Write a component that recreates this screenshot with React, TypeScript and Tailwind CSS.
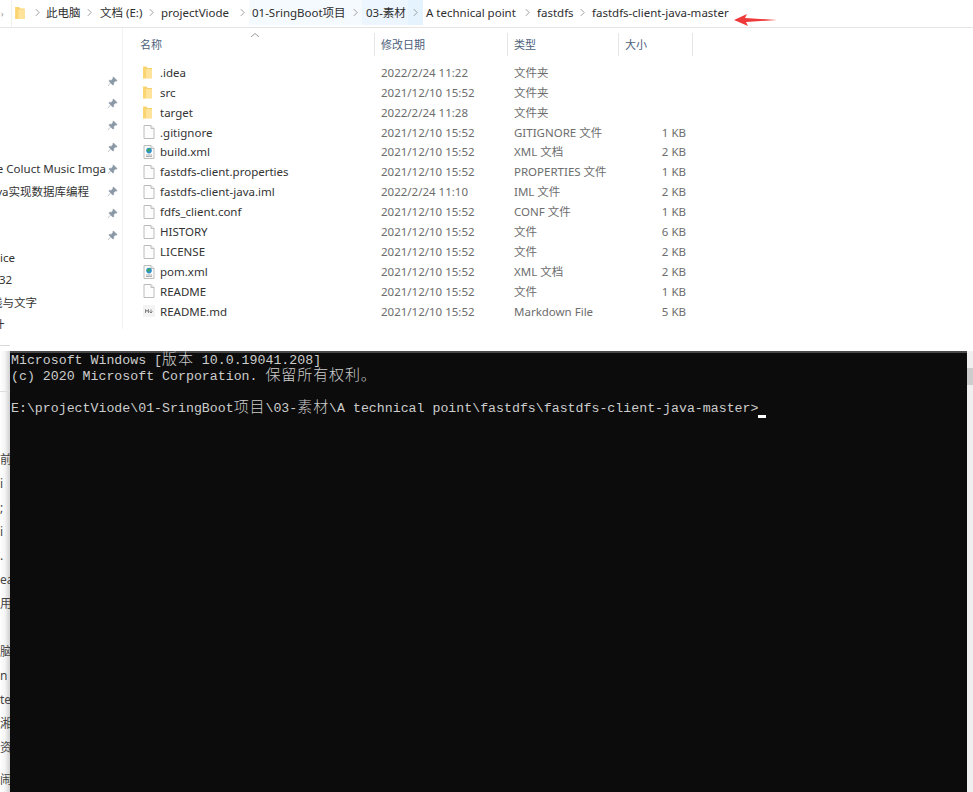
import React from 'react';

const UI_FONT = "font-['Noto_Sans','Noto_Sans_CJK_SC',sans-serif]";

interface FileRow {
  name: string;
  date: string;
  type: string;
  size: string;
  icon: 'folder' | 'file' | 'xml' | 'md';
}

const files: FileRow[] = [
  { name: '.idea', date: '2022/2/24 11:22', type: '文件夹', size: '', icon: 'folder' },
  { name: 'src', date: '2021/12/10 15:52', type: '文件夹', size: '', icon: 'folder' },
  { name: 'target', date: '2022/2/24 11:28', type: '文件夹', size: '', icon: 'folder' },
  { name: '.gitignore', date: '2021/12/10 15:52', type: 'GITIGNORE 文件', size: '1 KB', icon: 'file' },
  { name: 'build.xml', date: '2021/12/10 15:52', type: 'XML 文档', size: '2 KB', icon: 'xml' },
  { name: 'fastdfs-client.properties', date: '2021/12/10 15:52', type: 'PROPERTIES 文件', size: '1 KB', icon: 'file' },
  { name: 'fastdfs-client-java.iml', date: '2022/2/24 11:10', type: 'IML 文件', size: '2 KB', icon: 'file' },
  { name: 'fdfs_client.conf', date: '2021/12/10 15:52', type: 'CONF 文件', size: '1 KB', icon: 'file' },
  { name: 'HISTORY', date: '2021/12/10 15:52', type: '文件', size: '6 KB', icon: 'file' },
  { name: 'LICENSE', date: '2021/12/10 15:52', type: '文件', size: '2 KB', icon: 'file' },
  { name: 'pom.xml', date: '2021/12/10 15:52', type: 'XML 文档', size: '2 KB', icon: 'xml' },
  { name: 'README', date: '2021/12/10 15:52', type: '文件', size: '1 KB', icon: 'file' },
  { name: 'README.md', date: '2021/12/10 15:52', type: 'Markdown File', size: '5 KB', icon: 'md' },
];

const stripRows = ['前', 'i', ';', 'i', '.', 'ea', '用', '', '脑', 'n', 'te', '湘', '资'];

function FolderIcon({ className }: { className: string }) {
  return (
    <svg viewBox="0 0 10 13" className={className}>
      <path d="M0 0h4l1 1.5h5V13H0z" fill="#f7cf66" />
      <path d="M3 2.5h7V13H3z" fill="#ffe39a" />
      <path d="M0 0h3v13H0z" fill="#fbd56f" />
    </svg>
  );
}

function FileIcon({ kind }: { kind: FileRow['icon'] }) {
  if (kind === 'folder') return <FolderIcon className="w-[9px] h-[13px]" />;
  if (kind === 'md') {
    return (
      <svg viewBox="0 0 12 14" className="w-[12px] h-[14px]">
        <rect x="0" y="1" width="12" height="12" fill="#f3f3f3" />
        <path d="M2.5 9V5.5L4 7.5l1.5-2V9M8 5.5V9M6.5 7.5l1.5 1.5 1.5-1.5" stroke="#777" strokeWidth="0.9" fill="none" />
      </svg>
    );
  }
  return (
    <svg viewBox="0 0 12 14" className="w-[12px] h-[14px]">
      <path d="M1 .5h7l3 3v10H1z" fill="#fdfdfd" stroke="#bcbcbc" />
      <path d="M8 .5v3h3" fill="#f0f0f0" stroke="#bcbcbc" />
      {kind === 'xml' && (
        <>
          <circle cx="6" cy="5.6" r="2.8" fill="#2f8fd0" />
          <path d="M4 4.8l2.2-1.6 1.4 1-1.2 2-1.7.5z" fill="#3fae55" />
          <path d="M3 10h6M3 11.5h6" stroke="#9a9a9a" strokeWidth="0.8" />
        </>
      )}
    </svg>
  );
}

function Pin() {
  return (
    <svg viewBox="0 0 12 12" className="w-[11px] h-[11px] text-[#8a97a5]">
      <path d="M7 1l4 4-1 .6-.8-.2L7.2 7.4l.2 1.8-.9.8L2 5.5l.8-.9 1.8.2L6.6 2.8l-.2-.8zM4 7.5L1 11" fill="currentColor" stroke="currentColor" strokeWidth="0.6" />
    </svg>
  );
}

function Chevron() {
  return (
    <svg viewBox="0 0 6 10" className="w-[5px] h-[9px] shrink-0">
      <path d="M1 1l4 4-4 4" fill="none" stroke="#8a8a8a" strokeWidth="1" />
    </svg>
  );
}

function Sep({ width }: { width: string }) {
  return (
    <div className={`${width} h-full flex items-center justify-center shrink-0`}>
      <Chevron />
    </div>
  );
}

function Crumb({ label, className }: { label: string; className: string }) {
  return (
    <div className={`flex items-center h-full shrink-0 ${className}`}>
      <span className="whitespace-nowrap">{label}</span>
    </div>
  );
}

function AddressBar() {
  return (
    <div className="relative flex items-center h-[28px] shrink-0 border-b border-[#e5e5e5] text-[11.5px] text-[#2e2e2e]">
      <span className="w-[11px] shrink-0 pl-px text-[8px] text-[#888]">›</span>
      <div className="flex items-center h-full flex-1 border-l border-[#f0f0f0] pb-[2px]">
        <FolderIcon className="ml-[3px] w-[10px] h-[12px] shrink-0" />
        <div className="w-[7px] shrink-0" />
        <Sep width="w-[10px]" />
        <Crumb label="此电脑" className="ml-[4px] w-[38px]" />
        <Sep width="w-[10px]" />
        <Crumb label="文档 (E:)" className="ml-[6px] w-[46px]" />
        <Sep width="w-[10px]" />
        <Crumb label="projectViode" className="ml-[5px] w-[76px]" />
        <Sep width="w-[10px]" />
        <div className="flex items-center h-full ml-[2px] bg-[#f5faff] w-[113px] pl-[3px] shrink-0">
          <Crumb label="01-SringBoot项目" className="w-[97px]" />
          <Sep width="w-[13px]" />
        </div>
        <div className="flex items-center h-full bg-[#edf6ff] w-[46px] pl-[4px] shrink-0">
          <Crumb label="03-素材" className="w-[42px]" />
        </div>
        <div className="h-full w-[15px] bg-[#e5f3ff] shrink-0"><Sep width="w-[15px]" /></div>
        <Crumb label="A technical point" className="ml-[3px] w-[96px]" />
        <Sep width="w-[10px]" />
        <Crumb label="fastdfs" className="ml-[5px] w-[40px]" />
        <Sep width="w-[10px]" />
        <Crumb label="fastdfs-client-java-master" className="ml-[5px]" />
      </div>
      <svg viewBox="0 0 43 12" className="absolute left-[734px] top-[14px] w-[43px] h-[12px]">
        <path d="M0 6L13 0l-2 4 32 2-31 2 2 4z" fill="#ee3a3a" />
      </svg>
    </div>
  );
}

function QuickAccess() {
  return (
    <div className={`w-[123px] h-[301px] shrink-0 border-r border-[#f2f2f2] text-[11.5px] text-[#333] overflow-hidden pt-[42px] ${UI_FONT}`}>
      {[0, 1, 2, 3].map(i => (
        <div key={i} className="h-[22px] flex items-center justify-end pr-[4px]"><Pin /></div>
      ))}
      <div className="h-[22px] flex items-center justify-end">
        <span className="whitespace-nowrap shrink-0">e Coluct Music Imga</span>
        <span className="ml-[1px] mr-[4px] shrink-0"><Pin /></span>
      </div>
      <div className="h-[22px] flex items-center justify-end pt-px">
        <span className="whitespace-nowrap shrink-0 mr-[18px]">va实现数据库编程</span>
        <span className="mr-[4px] shrink-0 -mt-px"><Pin /></span>
      </div>
      {[0, 1].map(i => (
        <div key={i} className="h-[22px] flex items-center justify-end pr-[4px]"><Pin /></div>
      ))}
      <div className="h-[22px] flex items-center pt-[2px]">ice</div>
      <div className="h-[22px] flex items-center pt-[2px]"><span className="-ml-px">32</span></div>
      <div className="h-[22px] flex items-center pt-[3px]"><span className="-ml-[9px] whitespace-nowrap">线与文字</span></div>
      <div className="h-[22px] flex items-center pt-[3px]"><span className="-ml-[7px]">计</span></div>
    </div>
  );
}

function HeaderCell({ label, width }: { label: string; width: string }) {
  return (
    <div className={`${width} h-[23px] flex items-center pl-[6px] border-r border-[#e5e5e5] text-[11px] text-[#4c607a]`}>
      {label}
    </div>
  );
}

function FileTable() {
  return (
    <div className={`flex-1 ${UI_FONT}`}>
      <div className="relative flex items-center h-[34.5px] pb-px">
        <div className="w-[252px] h-[23px] flex items-center pl-[17px] border-r border-[#e5e5e5] text-[11px] text-[#4c607a]">名称</div>
        <HeaderCell label="修改日期" width="w-[133px]" />
        <HeaderCell label="类型" width="w-[111px]" />
        <HeaderCell label="大小" width="w-[74px]" />
        <svg viewBox="0 0 8 4" className="absolute left-[128px] top-[5px] w-[8px] h-[4px]">
          <path d="M0 4l4-3.5L8 4" fill="none" stroke="#9a9a9a" />
        </svg>
      </div>
      {files.map(f => (
        <div key={f.name} className="flex items-center h-[19.92px] text-[11.5px]">
          <div className="w-[252px] flex items-center text-[#333]">
            <div className="w-[20px] ml-[17px] pl-[3px] flex"><FileIcon kind={f.icon} /></div>
            <span className="whitespace-nowrap">{f.name}</span>
          </div>
          <div className="w-[133px] pl-[6px] text-[#6d6d6d]">{f.date}</div>
          <div className="w-[111px] pl-[6px] text-[#6d6d6d]">{f.type}</div>
          <div className="w-[67px] text-right text-[#6d6d6d]">{f.size}</div>
        </div>
      ))}
    </div>
  );
}

function Cjk({ children }: { children: string }) {
  return <span className="text-[15px] tracking-[0.9px] font-light font-['Noto_Sans_CJK_SC',sans-serif] leading-[16px]">{children}</span>;
}

function Terminal() {
  return (
    <div className="relative flex flex-1 min-h-0">
      <div className="absolute left-0 -top-[6px] w-[10px] h-[6px] border-t border-[#d8d8d8]" />
      <div className={`relative w-[10px] shrink-0 overflow-hidden pt-[97px] bg-gradient-to-r from-white via-[#f4f4f4] to-[#cfcfcf] text-[12px] text-[#444] ${UI_FONT}`}>
        <div className="absolute left-0 top-[40px] w-full h-px bg-[#dddddd]" />
        {stripRows.map((t, i) => (
          <div key={i} className="h-[24px] flex items-center whitespace-nowrap">{t}</div>
        ))}
        <div className="h-[24px] mt-[8px] flex items-center whitespace-nowrap">闹</div>
      </div>
      <div className="flex-1 bg-[#0c0c0c] border-t-2 border-[#4a4a4a] pl-px pt-[2px] font-['Liberation_Mono',monospace] text-[13.25px] text-[#cccccc] whitespace-pre">
        <div className="h-[16px] flex items-end">
          <span>Microsoft Windows [<Cjk>版本</Cjk> 10.0.19041.208]</span>
        </div>
        <div className="h-[16px] flex items-end">
          <span>(c) 2020 Microsoft Corporation. <Cjk>保留所有权利。</Cjk></span>
        </div>
        <div className="h-[16px]" />
        <div className="h-[16px] flex items-end">
          <span>E:\projectViode\01-SringBoot<Cjk>项目</Cjk>\03-<Cjk>素材</Cjk>\A technical point\fastdfs\fastdfs-client-java-master&gt;</span>
          <span className="w-[8px] h-[3px] bg-white mb-[1px]" />
        </div>
      </div>
      <div className="w-[6px] shrink-0 bg-[#f0f0f0] pt-[17px]">
        <div className="h-[17px] bg-[#cdcdcd]" />
      </div>
    </div>
  );
}

export default function App() {
  return (
    <div className={`w-[973px] h-[792px] bg-white flex flex-col overflow-hidden ${UI_FONT}`}>
      <AddressBar />
      <div className="flex h-[323px] shrink-0">
        <QuickAccess />
        <FileTable />
      </div>
      <Terminal />
    </div>
  );
}
